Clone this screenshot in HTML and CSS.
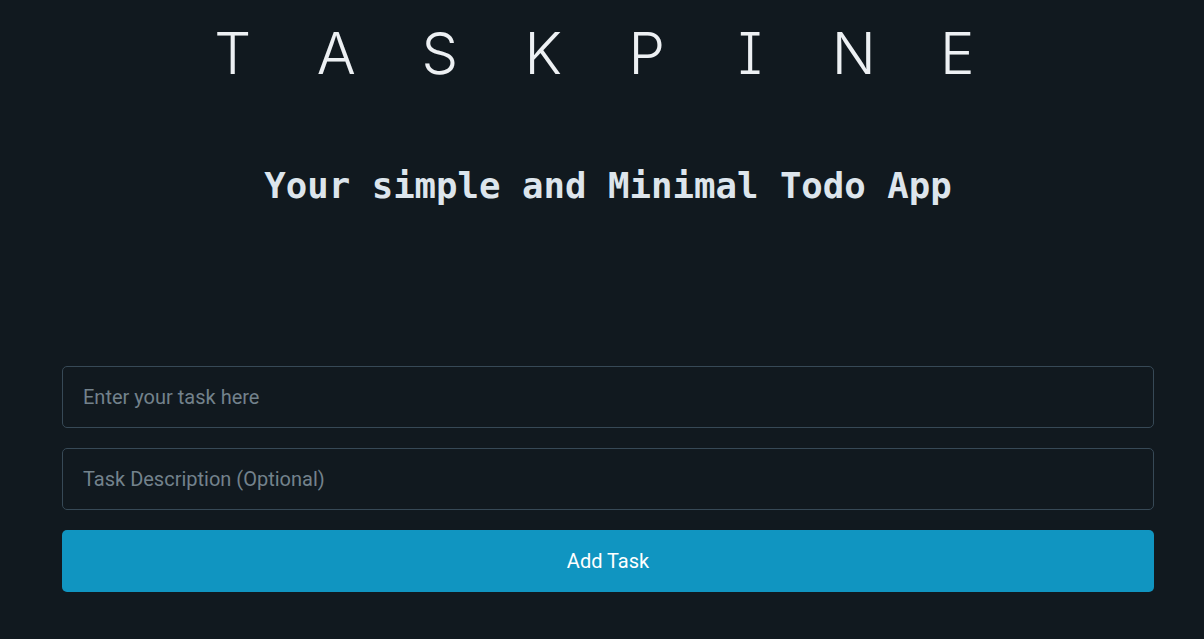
FILE: index.html
```html
<!DOCTYPE html>
<html lang="en">
<head>
<meta charset="utf-8">
<title>Taskpine</title>
<link rel="stylesheet" href="styles.css">
</head>
<body>
<main class="page">
  <h1 class="brand" aria-label="TASKPINE">
    <span>T</span><span>A</span><span>S</span><span>K</span><span>P</span><span>I</span><span>N</span><span>E</span>
  </h1>
  <h2 class="tagline">Your simple and Minimal Todo App</h2>
  <form class="task-form">
    <input class="field" type="text" placeholder="Enter your task here">
    <input class="field" type="text" placeholder="Task Description (Optional)">
    <button class="add-btn" type="button">Add Task</button>
  </form>
</main>
</body>
</html>
```
FILE: styles.css
```css
html, body {
  margin: 0;
  padding: 0;
  background: #11191f;
}
body {
  font-family: Roboto, "Liberation Sans", sans-serif;
  color: #e1e6eb;
}
.page {
  display: flex;
  flex-direction: column;
}
.brand {
  margin: 18px 0 0 0;
  padding-left: 181px;
  display: flex;
  font-family: Inter, "Liberation Sans", sans-serif;
  font-feature-settings: "cv08" 1;
  font-weight: 300;
  font-size: 58px;
  line-height: 70px;
  color: #edf0f3;
}
.brand span {
  width: 103.5px;
  text-align: center;
}
.tagline {
  margin: 76px 0 0 0;
  text-align: center;
  padding-left: 12px;
  font-family: "DejaVu Sans Mono", "Liberation Mono", monospace;
  font-weight: 700;
  font-size: 35.7px;
  line-height: 44px;
  color: #dde5ec;
}
.task-form {
  margin: 158px 0 0 62px;
  width: 1092px;
  display: flex;
  flex-direction: column;
  gap: 20px;
}
.field {
  box-sizing: border-box;
  height: 62px;
  padding: 0 20px;
  border: 1px solid #374956;
  border-radius: 5px;
  background: #11191f;
  font-family: Roboto, "Liberation Sans", sans-serif;
  font-size: 20px;
  color: #e1e6eb;
  outline: none;
}
.field::placeholder {
  color: #73828c;
}
.add-btn {
  box-sizing: border-box;
  height: 62px;
  border: 0;
  border-radius: 5px;
  background: #1095c1;
  color: #ffffff;
  font-family: Roboto, "Liberation Sans", sans-serif;
  font-size: 20px;
  cursor: pointer;
}
```
